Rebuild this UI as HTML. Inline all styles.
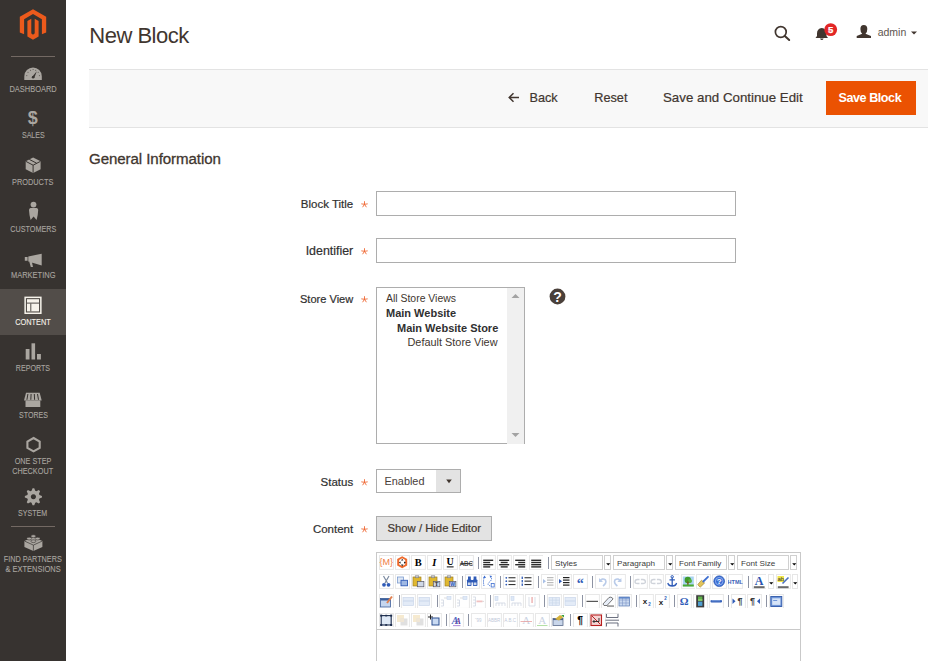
<!DOCTYPE html>
<html><head><meta charset="utf-8"><style>
*{box-sizing:border-box;margin:0;padding:0}
html,body{width:944px;height:661px;overflow:hidden;background:#fff;font-family:"Liberation Sans",sans-serif;color:#303030}
.t{position:absolute;white-space:nowrap;line-height:1}
#side{position:absolute;left:0;top:0;width:66px;height:661px;background:#373330}
.sep{position:absolute;left:11px;width:44px;height:1px;background:#736963}
.ml{position:absolute;left:-50px;width:166px;text-align:center;font-size:9.5px;line-height:1;color:#aaa6a0;white-space:nowrap}
.ml span{display:inline-block;transform:scaleX(0.77);transform-origin:50% 50%;-webkit-text-stroke:0.1px currentColor}
.act{position:absolute;left:0;top:289px;width:66px;height:46px;background:#524d49}
svg.ov{position:absolute;left:0;top:0}
.lbl{position:absolute;font-size:11.5px;line-height:1;color:#303030;white-space:nowrap;text-align:right;-webkit-text-stroke:0.2px #303030}
.req{position:absolute;font-size:12px;color:#eb5202;line-height:1}
.inp{position:absolute;border:1px solid #adadad;background:#fff}
</style></head><body>
<div id="side">
<div class="act"></div>
<div class="sep" style="top:56px"></div>
<div class="sep" style="top:526px"></div>
<div class="ml" style="top:83.96px"><span style="transform:scaleX(0.785)">DASHBOARD</span></div>
<div class="ml" style="top:129.96px"><span style="transform:scaleX(0.743)">SALES</span></div>
<div class="ml" style="top:176.96px"><span style="transform:scaleX(0.774)">PRODUCTS</span></div>
<div class="ml" style="top:224.26px"><span style="transform:scaleX(0.760)">CUSTOMERS</span></div>
<div class="ml" style="top:269.96px"><span style="transform:scaleX(0.788)">MARKETING</span></div>
<div class="ml" style="top:316.96px;color:#f7f3eb"><span style="transform:scaleX(0.776)">CONTENT</span></div>
<div class="ml" style="top:363.26px"><span style="transform:scaleX(0.746)">REPORTS</span></div>
<div class="ml" style="top:410.26px"><span style="transform:scaleX(0.742)">STORES</span></div>
<div class="ml" style="top:455.96px"><span style="transform:scaleX(0.765)">ONE STEP</span></div>
<div class="ml" style="top:465.66px"><span style="transform:scaleX(0.768)">CHECKOUT</span></div>
<div class="ml" style="top:507.96px"><span style="transform:scaleX(0.745)">SYSTEM</span></div>
<div class="ml" style="top:553.96px"><span style="transform:scaleX(0.767)">FIND PARTNERS</span></div>
<div class="ml" style="top:563.96px"><span style="transform:scaleX(0.785)">&amp; EXTENSIONS</span></div>
</div>
<svg class="ov" width="66" height="661" viewBox="0 0 66 661">
<path fill="#ec5a1c" d="M33,9.2 L46.2,16.8 L46.2,32.5 L41.9,34.2 L41.9,19.3 L33,14.1 L24.1,19.3 L24.1,34.2 L19.8,32.5 L19.8,16.8 Z"/>
<path fill="#ec5a1c" d="M27.4,21 L31.3,18.8 L31.3,33.2 Q33,35.8 34.7,33.2 L34.7,18.8 L38.6,21 L38.6,36.5 L33,39.8 L27.4,36.5 Z"/>
<path fill="#aaa6a0" d="M24.3,80 L24.3,76.3 A8.75,8.75 0 0 1 41.8,76.3 L41.8,80 Z"/>
<path fill="#373330" d="M32,77 L36.8,71.3 L34.3,77.8 Z"/><circle cx="33.1" cy="77.2" r="1.3" fill="#373330"/>
<circle cx="26.8" cy="75.6" r="0.55" fill="#5a5550"/>
<circle cx="28.0" cy="72.3" r="0.55" fill="#5a5550"/>
<circle cx="30.5" cy="70.2" r="0.55" fill="#5a5550"/>
<circle cx="33.1" cy="69.5" r="0.55" fill="#5a5550"/>
<circle cx="35.7" cy="70.2" r="0.55" fill="#5a5550"/>
<circle cx="38.2" cy="72.3" r="0.55" fill="#5a5550"/>
<circle cx="39.4" cy="75.6" r="0.55" fill="#5a5550"/>
<text x="32.7" y="124.3" font-family="Liberation Sans" font-weight="bold" font-size="18" fill="#aaa6a0" text-anchor="middle">$</text>
<path fill="#aaa6a0" d="M33.1,157.4 L40.6,161.2 L40.6,169.2 L33.1,173 L25.7,169.2 L25.7,161.2 Z"/>
<path fill="none" stroke="#373330" stroke-width="1" d="M25.9,161.4 L33.1,165.2 L40.4,161.4 M33.1,165.2 L33.1,172.8 M29.3,159.4 L36.6,163.2"/>
<circle cx="33.5" cy="204.6" r="2.9" fill="#aaa6a0"/>
<path fill="#aaa6a0" d="M30.5,208 L36.7,208 Q38.2,208.3 38.2,210 L37.7,215 L36.6,220 L33.6,216.6 L30.6,220 L29.5,215 L29,210 Q29,208.3 30.5,208 Z"/>
<path fill="#aaa6a0" d="M24.8,257 L27.6,257 L27.6,260.8 L24.8,260.8 Z M28.3,256.4 L41.7,253.7 L41.7,265.4 L28.3,261.4 Z M29.2,261.6 L32,262.4 L33,266.9 L30.8,266.9 Z"/>
<rect x="24.4" y="296.6" width="17.2" height="17.4" fill="#f7f3eb"/>
<rect x="25.9" y="298.1" width="14.2" height="14.4" fill="#524d49"/>
<rect x="27" y="299.2" width="12" height="12.2" fill="#f7f3eb"/>
<rect x="27" y="302.6" width="12" height="1" fill="#524d49"/>
<rect x="30.3" y="303.4" width="1" height="8" fill="#524d49"/>
<rect x="25.7" y="349" width="3.8" height="10.5" fill="#aaa6a0"/>
<rect x="31.5" y="343.3" width="3.6" height="16.2" fill="#aaa6a0"/>
<rect x="37" y="354" width="3.9" height="5.5" fill="#aaa6a0"/>
<path fill="#aaa6a0" d="M26,392.8 L39.7,392.8 L41.7,400.5 L24,400.5 Z"/>
<path stroke="#373330" stroke-width="1" d="M27.9,394 L26.9,399.8 M31.1,394 L30.8,399.8 M34.3,394 L34.6,399.8 M37.5,394 L38.5,399.8"/>
<rect x="25.5" y="400.5" width="14.8" height="6.5" fill="#aaa6a0"/>
<path fill="none" stroke="#aaa6a0" stroke-width="2.1" d="M33.55,438 L39.7,441.5 L39.7,447.8 L33.55,451.3 L27.4,447.8 L27.4,441.5 Z"/>
<path fill="#aaa6a0" fill-rule="evenodd" d="M41.96,495.91 L41.96,497.59 L39.43,498.58 L38.96,499.72 L40.05,502.21 L38.86,503.40 L36.37,502.31 L35.23,502.78 L34.24,505.31 L32.56,505.31 L31.57,502.78 L30.43,502.31 L27.94,503.40 L26.75,502.21 L27.84,499.72 L27.37,498.58 L24.84,497.59 L24.84,495.91 L27.37,494.92 L27.84,493.78 L26.75,491.29 L27.94,490.10 L30.43,491.19 L31.57,490.72 L32.56,488.19 L34.24,488.19 L35.23,490.72 L36.37,491.19 L38.86,490.10 L40.05,491.29 L38.96,493.78 L39.43,494.92 Z M33.40,494.15 a2.6,2.6 0 1 0 0.01,0 Z"/>
<path fill="#aaa6a0" d="M33.4,537 L42.4,541 L42.4,547 L33.4,551 L24.4,547 L24.4,541 Z"/>
<path fill="none" stroke="#373330" stroke-width="0.7" d="M24.6,541.1 L33.4,545.1 L42.2,541.1 M33.4,545.1 L33.4,550.8"/>
<ellipse cx="33.4" cy="536.2" rx="2.5" ry="1.4" fill="#aaa6a0" stroke="#373330" stroke-width="0.6"/>
<ellipse cx="29.2" cy="538.6" rx="2.5" ry="1.4" fill="#aaa6a0" stroke="#373330" stroke-width="0.6"/>
<ellipse cx="37.6" cy="538.6" rx="2.5" ry="1.4" fill="#aaa6a0" stroke="#373330" stroke-width="0.6"/>
<ellipse cx="33.4" cy="541.2" rx="2.5" ry="1.4" fill="#aaa6a0" stroke="#373330" stroke-width="0.6"/>
</svg>
<div class="t" style="left:89.30px;top:24.78px;font-size:22px;color:#41362f;font-weight:normal;letter-spacing:-0.5px">New Block</div>
<div style="position:absolute;left:89px;top:69px;width:839px;height:59px;background:#f8f8f8;border-top:1px solid #e3e3e3;border-bottom:1px solid #e3e3e3"></div>
<div class="t" style="left:529.50px;top:91.75px;font-size:12.7px;color:#41362f;font-weight:normal;-webkit-text-stroke:0.2px #41362f">Back</div>
<div class="t" style="left:594.30px;top:91.75px;font-size:12.7px;color:#41362f;font-weight:normal;-webkit-text-stroke:0.2px #41362f">Reset</div>
<div class="t" style="left:663.00px;top:90.74px;font-size:13.3px;color:#41362f;font-weight:normal;-webkit-text-stroke:0.2px #41362f">Save and Continue Edit</div>
<div style="position:absolute;left:826px;top:81px;width:90px;height:34px;background:#eb5202"></div>
<div class="t" style="left:838.50px;top:91.83px;font-size:12.6px;color:#ffffff;font-weight:bold;letter-spacing:-0.45px">Save Block</div>
<div class="t" style="left:877.70px;top:27.31px;font-size:10.5px;color:#5e554f;font-weight:normal;">admin</div>
<div class="t" style="left:89.00px;top:151.42px;font-size:15.1px;color:#41362f;font-weight:normal;-webkit-text-stroke:0.3px #41362f;letter-spacing:-0.08px">General Information</div>
<svg class="ov" width="944" height="661" viewBox="0 0 944 661">
<path fill="none" stroke="#41362f" stroke-width="1.5" d="M519,97.5 L509.5,97.5 M513.5,93.2 L509.2,97.5 L513.5,101.8"/>
<circle cx="780.8" cy="32" r="5.4" fill="none" stroke="#41362f" stroke-width="1.7"/>
<path stroke="#41362f" stroke-width="2" stroke-linecap="round" d="M784.8,36 L789.2,40"/>
<path fill="#41362f" d="M821.8,28 Q826.5,28.5 826.5,33.5 L826.5,36 L828,38 L815.5,38 L817,36 L817,33.5 Q817,28.5 821.8,28 Z"/>
<path fill="#41362f" d="M820,38.5 L823.6,38.5 Q823,40 821.8,40 Q820.6,40 820,38.5 Z"/>
<circle cx="830.7" cy="29.6" r="6.4" fill="#e22626"/>
<text x="830.7" y="32.9" font-family="Liberation Sans" font-weight="bold" font-size="9.5" fill="#fff" text-anchor="middle" stroke="#fff" stroke-width="0.25">5</text>
<path fill="#41362f" d="M863.8,24.9 Q867.3,25 867.3,29 Q867.3,32.5 865.5,33.8 L871,36 L871,38 L856.7,38 L856.7,36 L862.2,33.8 Q860.4,32.5 860.4,29 Q860.4,25 863.8,24.9 Z"/>
<path fill="#41362f" d="M911,31.5 L917,31.5 L914,34.6 Z"/>
</svg>
<div class="lbl" style="right:590.80px;top:198.87px;font-size:11.5px">Block Title</div>
<svg style="position:absolute;left:360.6px;top:200.80px" width="7" height="7" viewBox="0 0 7 7"><path stroke="#ef6a35" stroke-width="0.9" stroke-linecap="round" d="M3.5,3.3 L3.5,0.6 M3.5,3.3 L0.7,2.9 M3.5,3.3 L6.3,2.9 M3.5,3.3 L1.8,5.9 M3.5,3.3 L5.2,5.9"/></svg>
<div class="inp" style="left:376px;top:191px;width:360px;height:25px"></div>
<div class="lbl" style="right:590.80px;top:245.30px;font-size:12.4px">Identifier</div>
<svg style="position:absolute;left:360.6px;top:248.00px" width="7" height="7" viewBox="0 0 7 7"><path stroke="#ef6a35" stroke-width="0.9" stroke-linecap="round" d="M3.5,3.3 L3.5,0.6 M3.5,3.3 L0.7,2.9 M3.5,3.3 L6.3,2.9 M3.5,3.3 L1.8,5.9 M3.5,3.3 L5.2,5.9"/></svg>
<div class="inp" style="left:376px;top:238px;width:360px;height:25px"></div>
<div class="lbl" style="right:590.80px;top:294.15px;font-size:11.05px">Store View</div>
<svg style="position:absolute;left:360.6px;top:295.70px" width="7" height="7" viewBox="0 0 7 7"><path stroke="#ef6a35" stroke-width="0.9" stroke-linecap="round" d="M3.5,3.3 L3.5,0.6 M3.5,3.3 L0.7,2.9 M3.5,3.3 L6.3,2.9 M3.5,3.3 L1.8,5.9 M3.5,3.3 L5.2,5.9"/></svg>
<div class="inp" style="left:376px;top:287px;width:149px;height:157px;overflow:visible"><div style="position:absolute;right:0;top:0;width:17px;height:156px;background:#f0f0f0"></div><svg style="position:absolute;right:4px;top:4.8px" width="9" height="6"><path fill="#a3a3a3" d="M0.5,5 L4.5,1 L8.5,5 Z"/></svg><svg style="position:absolute;right:4px;top:144px" width="9" height="6"><path fill="#a3a3a3" d="M0.5,1 L4.5,5 L8.5,1 Z"/></svg></div>
<div class="t" style="left:386.00px;top:293.85px;font-size:10.45px;color:#41362f;font-weight:normal;">All Store Views</div>
<div class="t" style="left:386.00px;top:307.79px;font-size:11px;color:#303030;font-weight:bold;">Main Website</div>
<div class="t" style="left:397.00px;top:323.09px;font-size:11px;color:#303030;font-weight:bold;">Main Website Store</div>
<div class="t" style="left:407.50px;top:337.07px;font-size:10.9px;color:#41362f;font-weight:normal;">Default Store View</div>
<svg style="position:absolute;left:549px;top:288px" width="17" height="17" viewBox="0 0 17 17"><circle cx="8.5" cy="8.5" r="7.9" fill="#4a403a"/><text x="8.5" y="13.6" font-family="Liberation Sans" font-weight="bold" font-size="14" fill="#fff" text-anchor="middle">?</text></svg>
<div class="lbl" style="right:590.80px;top:477.27px;font-size:11.5px">Status</div>
<svg style="position:absolute;left:360.6px;top:479.20px" width="7" height="7" viewBox="0 0 7 7"><path stroke="#ef6a35" stroke-width="0.9" stroke-linecap="round" d="M3.5,3.3 L3.5,0.6 M3.5,3.3 L0.7,2.9 M3.5,3.3 L6.3,2.9 M3.5,3.3 L1.8,5.9 M3.5,3.3 L5.2,5.9"/></svg>
<div class="inp" style="left:376px;top:469px;width:85px;height:24px"><div style="position:absolute;left:59px;top:0;width:24px;height:22px;background:#e3e3e3"></div><svg style="position:absolute;left:68.5px;top:9.3px" width="7" height="5"><path fill="#41362f" d="M0.2,0.5 L5.8,0.5 L3,4.3 Z"/></svg></div>
<div class="t" style="left:384.50px;top:475.97px;font-size:10.9px;color:#4a403a;font-weight:normal;">Enabled</div>
<div class="lbl" style="right:590.80px;top:523.97px;font-size:11.5px">Content</div>
<svg style="position:absolute;left:360.6px;top:525.90px" width="7" height="7" viewBox="0 0 7 7"><path stroke="#ef6a35" stroke-width="0.9" stroke-linecap="round" d="M3.5,3.3 L3.5,0.6 M3.5,3.3 L0.7,2.9 M3.5,3.3 L6.3,2.9 M3.5,3.3 L1.8,5.9 M3.5,3.3 L5.2,5.9"/></svg>
<div class="inp" style="left:376px;top:516px;width:116px;height:25px;background:#e3e3e3"></div>
<div class="t" style="left:387.50px;top:523.23px;font-size:11.3px;color:#41362f;font-weight:normal;-webkit-text-stroke:0.2px #41362f">Show / Hide Editor</div>
<div style="position:absolute;left:376px;top:552px;width:425px;height:120px;border:1px solid #c9c9c9;background:#fff"></div>
<div style="position:absolute;left:377px;top:629px;width:423px;height:1px;background:#c9c9c9"></div>
<svg style="position:absolute;left:379.20px;top:555.40px" width="14.9" height="14.9" viewBox="0 0 14.9 14.9"><rect x="0.5" y="0.5" width="13.9" height="13.9" fill="#fff" stroke="#e8e8e8" stroke-width="1"/><text x="7.2" y="10.3" font-family="Liberation Sans" font-size="9" fill="#f07b3f" text-anchor="middle">{M}</text></svg>
<svg style="position:absolute;left:395.10px;top:555.40px" width="14.9" height="14.9" viewBox="0 0 14.9 14.9"><rect x="0.5" y="0.5" width="13.9" height="13.9" fill="#fff" stroke="#e8e8e8" stroke-width="1"/><path fill="#ee6a2c" d="M7.2,1.2 L12.2,4 L12.2,10.4 L7.2,13.2 L2.2,10.4 L2.2,4 Z"/><path fill="#fff" d="M7.2,3.3 L10.2,5 L10.2,9.4 L7.2,11.1 L4.2,9.4 L4.2,5 Z"/><path fill="#222" d="M7.2,3.8 L8.4,5.6 L6,5.6 Z M7.2,11.6 L8.4,9.6 L6,9.6 Z M3.8,7.6 L5.6,6.4 L5.6,8.8 Z M11,7.6 L9,6.4 L9,8.8 Z"/></svg>
<svg style="position:absolute;left:411.00px;top:555.40px" width="14.9" height="14.9" viewBox="0 0 14.9 14.9"><rect x="0.5" y="0.5" width="13.9" height="13.9" fill="#fff" stroke="#e8e8e8" stroke-width="1"/><text x="7.2" y="11" font-family="Liberation Serif" font-weight="bold" font-size="10.5" fill="#000" text-anchor="middle">B</text></svg>
<svg style="position:absolute;left:426.90px;top:555.40px" width="14.9" height="14.9" viewBox="0 0 14.9 14.9"><rect x="0.5" y="0.5" width="13.9" height="13.9" fill="#fff" stroke="#e8e8e8" stroke-width="1"/><text x="7.2" y="11" font-family="Liberation Serif" font-weight="bold" font-style="italic" font-size="10.5" fill="#000" text-anchor="middle">I</text></svg>
<svg style="position:absolute;left:442.80px;top:555.40px" width="14.9" height="14.9" viewBox="0 0 14.9 14.9"><rect x="0.5" y="0.5" width="13.9" height="13.9" fill="#fff" stroke="#e8e8e8" stroke-width="1"/><text x="7.2" y="10.3" font-family="Liberation Serif" font-weight="bold" font-size="10" fill="#000" text-anchor="middle">U</text><rect x="3.8" y="11.4" width="6.8" height="1" fill="#000"/></svg>
<svg style="position:absolute;left:458.70px;top:555.40px" width="14.9" height="14.9" viewBox="0 0 14.9 14.9"><rect x="0.5" y="0.5" width="13.9" height="13.9" fill="#fff" stroke="#e8e8e8" stroke-width="1"/><text x="7.4" y="11" font-family="Liberation Sans" font-size="6.5" fill="#111" text-anchor="middle" transform="translate(7.4,0) scale(1,1.15) translate(-7.4,-1.4)">ABC</text><rect x="1.5" y="8.3" width="11.8" height="0.9" fill="#111"/></svg>
<div style="position:absolute;left:478.00px;top:556.60px;width:1px;height:12px;background:#8d93a3"></div>
<svg style="position:absolute;left:480.80px;top:555.40px" width="14.9" height="14.9" viewBox="0 0 14.9 14.9"><rect x="0.5" y="0.5" width="13.9" height="13.9" fill="#fff" stroke="#e8e8e8" stroke-width="1"/><rect x="2.2" y="4.6" width="10.0" height="1.4" fill="#2a2a2a"/><rect x="2.2" y="6.8" width="7.0" height="1.4" fill="#2a2a2a"/><rect x="2.2" y="9.0" width="10.0" height="1.4" fill="#2a2a2a"/><rect x="2.2" y="11.2" width="7.0" height="1.4" fill="#2a2a2a"/></svg>
<svg style="position:absolute;left:496.70px;top:555.40px" width="14.9" height="14.9" viewBox="0 0 14.9 14.9"><rect x="0.5" y="0.5" width="13.9" height="13.9" fill="#fff" stroke="#e8e8e8" stroke-width="1"/><rect x="2.2" y="4.6" width="10.0" height="1.4" fill="#2a2a2a"/><rect x="3.7" y="6.8" width="7.0" height="1.4" fill="#2a2a2a"/><rect x="2.2" y="9.0" width="10.0" height="1.4" fill="#2a2a2a"/><rect x="3.7" y="11.2" width="7.0" height="1.4" fill="#2a2a2a"/></svg>
<svg style="position:absolute;left:512.60px;top:555.40px" width="14.9" height="14.9" viewBox="0 0 14.9 14.9"><rect x="0.5" y="0.5" width="13.9" height="13.9" fill="#fff" stroke="#e8e8e8" stroke-width="1"/><rect x="2.2" y="4.6" width="10.0" height="1.4" fill="#2a2a2a"/><rect x="5.2" y="6.8" width="7.0" height="1.4" fill="#2a2a2a"/><rect x="2.2" y="9.0" width="10.0" height="1.4" fill="#2a2a2a"/><rect x="5.2" y="11.2" width="7.0" height="1.4" fill="#2a2a2a"/></svg>
<svg style="position:absolute;left:528.50px;top:555.40px" width="14.9" height="14.9" viewBox="0 0 14.9 14.9"><rect x="0.5" y="0.5" width="13.9" height="13.9" fill="#fff" stroke="#e8e8e8" stroke-width="1"/><rect x="2.2" y="4.6" width="10.0" height="1.4" fill="#2a2a2a"/><rect x="2.2" y="6.8" width="10.0" height="1.4" fill="#2a2a2a"/><rect x="2.2" y="9.0" width="10.0" height="1.4" fill="#2a2a2a"/><rect x="2.2" y="11.2" width="10.0" height="1.4" fill="#2a2a2a"/></svg>
<div style="position:absolute;left:547.80px;top:556.60px;width:1px;height:12px;background:#8d93a3"></div>
<svg style="position:absolute;left:379.20px;top:574.40px" width="14.9" height="14.9" viewBox="0 0 14.9 14.9"><rect x="0.5" y="0.5" width="13.9" height="13.9" fill="#fff" stroke="#e8e8e8" stroke-width="1"/><path stroke="#7b8aa0" stroke-width="1.2" d="M4.5,2 L8.5,9 M10,2 L6,9"/><circle cx="5" cy="10.8" r="1.9" fill="#2f5bb7"/><circle cx="9.5" cy="10.8" r="1.9" fill="#2f5bb7"/></svg>
<svg style="position:absolute;left:395.10px;top:574.40px" width="14.9" height="14.9" viewBox="0 0 14.9 14.9"><rect x="0.5" y="0.5" width="13.9" height="13.9" fill="#fff" stroke="#e8e8e8" stroke-width="1"/><rect x="2.5" y="3" width="6" height="6" fill="#dfe8f5" stroke="#7c9ccf" stroke-width="0.8"/><rect x="6" y="6.3" width="6.5" height="5.5" fill="#9fb8e3" stroke="#2f5bb7" stroke-width="0.9"/></svg>
<svg style="position:absolute;left:411.00px;top:574.40px" width="14.9" height="14.9" viewBox="0 0 14.9 14.9"><rect x="0.5" y="0.5" width="13.9" height="13.9" fill="#fff" stroke="#e8e8e8" stroke-width="1"/><rect x="2" y="3" width="8" height="9" fill="#e0b830" stroke="#a08020" stroke-width="0.7"/><rect x="4.2" y="1.8" width="3.6" height="2" fill="#c9c9c9" stroke="#777" stroke-width="0.5"/><rect x="6.3" y="7.5" width="6.6" height="5.3" fill="#cfd8e6" stroke="#556" stroke-width="0.7"/></svg>
<svg style="position:absolute;left:426.90px;top:574.40px" width="14.9" height="14.9" viewBox="0 0 14.9 14.9"><rect x="0.5" y="0.5" width="13.9" height="13.9" fill="#fff" stroke="#e8e8e8" stroke-width="1"/><rect x="2" y="3" width="8" height="9" fill="#e0b830" stroke="#a08020" stroke-width="0.7"/><rect x="4.2" y="1.8" width="3.6" height="2" fill="#c9c9c9" stroke="#777" stroke-width="0.5"/><rect x="6.3" y="7.5" width="6.6" height="5.3" fill="#cfd8e6" stroke="#556" stroke-width="0.7"/><text x="9.5" y="12" font-family="Liberation Serif" font-weight="bold" font-size="5.5" fill="#222" text-anchor="middle">T</text></svg>
<svg style="position:absolute;left:442.80px;top:574.40px" width="14.9" height="14.9" viewBox="0 0 14.9 14.9"><rect x="0.5" y="0.5" width="13.9" height="13.9" fill="#fff" stroke="#e8e8e8" stroke-width="1"/><rect x="2" y="3" width="8" height="9" fill="#e0b830" stroke="#a08020" stroke-width="0.7"/><rect x="4.2" y="1.8" width="3.6" height="2" fill="#c9c9c9" stroke="#777" stroke-width="0.5"/><rect x="6.3" y="7.5" width="6.6" height="5.3" fill="#cfd8e6" stroke="#556" stroke-width="0.7"/><text x="9.5" y="12" font-family="Liberation Sans" font-weight="bold" font-size="5" fill="#2a52be" text-anchor="middle">W</text></svg>
<div style="position:absolute;left:462.10px;top:575.60px;width:1px;height:12px;background:#8d93a3"></div>
<svg style="position:absolute;left:464.90px;top:574.40px" width="14.9" height="14.9" viewBox="0 0 14.9 14.9"><rect x="0.5" y="0.5" width="13.9" height="13.9" fill="#fff" stroke="#e8e8e8" stroke-width="1"/><rect x="2" y="5.5" width="4.5" height="6.5" rx="0.8" fill="#2f5bb7"/><rect x="7.9" y="5.5" width="4.5" height="6.5" rx="0.8" fill="#2f5bb7"/><rect x="3" y="2.5" width="2.8" height="3.5" fill="#2f5bb7"/><rect x="8.6" y="2.5" width="2.8" height="3.5" fill="#2f5bb7"/><rect x="6" y="6" width="2.4" height="2.4" fill="#2f5bb7"/><rect x="2.8" y="8.5" width="2.8" height="2.6" fill="#cdd9ee"/><rect x="8.7" y="8.5" width="2.8" height="2.6" fill="#cdd9ee"/></svg>
<svg style="position:absolute;left:480.80px;top:574.40px" width="14.9" height="14.9" viewBox="0 0 14.9 14.9"><rect x="0.5" y="0.5" width="13.9" height="13.9" fill="#fff" stroke="#e8e8e8" stroke-width="1"/><path fill="none" stroke="#3f6fd0" stroke-width="1" stroke-dasharray="1.3,0.9" d="M3,12 Q1.8,7 3.5,2.5 M9.5,2 Q12,5 8.5,8 Q5,11 10,12"/><path fill="#3f6fd0" d="M2,4 L3.6,1.5 L5,4 Z M8.5,1.5 L11,2 L9.5,4 Z"/><rect x="10.2" y="9.6" width="3" height="3.4" fill="none" stroke="#3f6fd0" stroke-width="0.8"/></svg>
<div style="position:absolute;left:500.10px;top:575.60px;width:1px;height:12px;background:#8d93a3"></div>
<svg style="position:absolute;left:502.90px;top:574.40px" width="14.9" height="14.9" viewBox="0 0 14.9 14.9"><rect x="0.5" y="0.5" width="13.9" height="13.9" fill="#fff" stroke="#e8e8e8" stroke-width="1"/><circle cx="3.3" cy="3.8" r="0.9" fill="#2f5bb7"/><circle cx="3.3" cy="7.2" r="0.9" fill="#2f5bb7"/><circle cx="3.3" cy="10.6" r="0.9" fill="#2f5bb7"/><rect x="5.5" y="3.2" width="7" height="1.1" fill="#333"/><rect x="5.5" y="6.6" width="7" height="1.1" fill="#333"/><rect x="5.5" y="10" width="7" height="1.1" fill="#333"/></svg>
<svg style="position:absolute;left:518.80px;top:574.40px" width="14.9" height="14.9" viewBox="0 0 14.9 14.9"><rect x="0.5" y="0.5" width="13.9" height="13.9" fill="#fff" stroke="#e8e8e8" stroke-width="1"/><rect x="2.6" y="2.6" width="1.3" height="2.4" fill="#2f5bb7"/><rect x="2.6" y="6" width="1.3" height="2.4" fill="#2f5bb7"/><rect x="2.6" y="9.5" width="1.3" height="2.4" fill="#2f5bb7"/><rect x="5.5" y="3.2" width="7" height="1.1" fill="#333"/><rect x="5.5" y="6.6" width="7" height="1.1" fill="#333"/><rect x="5.5" y="10" width="7" height="1.1" fill="#333"/></svg>
<div style="position:absolute;left:538.10px;top:575.60px;width:1px;height:12px;background:#8d93a3"></div>
<svg style="position:absolute;left:540.90px;top:574.40px" width="14.9" height="14.9" viewBox="0 0 14.9 14.9"><rect x="0.5" y="0.5" width="13.9" height="13.9" fill="#fff" stroke="#e8e8e8" stroke-width="1"/><rect x="6" y="3" width="6.5" height="1.2" fill="#bbb"/><rect x="6" y="5.5" width="6.5" height="1.2" fill="#bbb"/><rect x="6" y="8" width="6.5" height="1.2" fill="#bbb"/><rect x="6" y="10.5" width="6.5" height="1.2" fill="#bbb"/><path fill="#a9c0e6" d="M2,5 L5,7.2 L2,9.4 Z"/></svg>
<svg style="position:absolute;left:556.80px;top:574.40px" width="14.9" height="14.9" viewBox="0 0 14.9 14.9"><rect x="0.5" y="0.5" width="13.9" height="13.9" fill="#fff" stroke="#e8e8e8" stroke-width="1"/><rect x="6" y="3" width="6.5" height="1.2" fill="#222"/><rect x="6" y="5.5" width="6.5" height="1.2" fill="#222"/><rect x="6" y="8" width="6.5" height="1.2" fill="#222"/><rect x="6" y="10.5" width="6.5" height="1.2" fill="#222"/><path fill="#2f5bb7" d="M2,5 L5,7.2 L2,9.4 Z"/></svg>
<svg style="position:absolute;left:572.70px;top:574.40px" width="14.9" height="14.9" viewBox="0 0 14.9 14.9"><rect x="0.5" y="0.5" width="13.9" height="13.9" fill="#fff" stroke="#e8e8e8" stroke-width="1"/><text x="7.2" y="14" font-family="Liberation Serif" font-weight="bold" font-size="14" fill="#2f5bb7" text-anchor="middle">&#8220;</text></svg>
<div style="position:absolute;left:592.00px;top:575.60px;width:1px;height:12px;background:#8d93a3"></div>
<svg style="position:absolute;left:594.80px;top:574.40px" width="14.9" height="14.9" viewBox="0 0 14.9 14.9"><rect x="0.5" y="0.5" width="13.9" height="13.9" fill="#fff" stroke="#e8e8e8" stroke-width="1"/><path fill="none" stroke="#b9cbe9" stroke-width="1.6" d="M4.5,7.5 Q7,3.5 10.5,6 Q12,9 8,12"/><path fill="#b9cbe9" d="M4,4 L4,8 L8,8 Z"/></svg>
<svg style="position:absolute;left:610.70px;top:574.40px" width="14.9" height="14.9" viewBox="0 0 14.9 14.9"><rect x="0.5" y="0.5" width="13.9" height="13.9" fill="#fff" stroke="#e8e8e8" stroke-width="1"/><path fill="none" stroke="#b9cbe9" stroke-width="1.6" d="M9.9,7.5 Q7.4,3.5 3.9,6 Q2.4,9 6.4,12"/><path fill="#b9cbe9" d="M10.4,4 L10.4,8 L6.4,8 Z"/></svg>
<div style="position:absolute;left:630.00px;top:575.60px;width:1px;height:12px;background:#8d93a3"></div>
<svg style="position:absolute;left:632.80px;top:574.40px" width="14.9" height="14.9" viewBox="0 0 14.9 14.9"><rect x="0.5" y="0.5" width="13.9" height="13.9" fill="#fff" stroke="#e8e8e8" stroke-width="1"/><path fill="none" stroke="#cfd3da" stroke-width="1.3" d="M2,8 Q2,5.5 4.5,5.5 L6.5,5.5 M7.9,5.5 L9.9,5.5 Q12.4,5.5 12.4,8 Q12.4,9.5 9.9,9.5 L7.9,9.5 M6.5,9.5 L4.5,9.5 Q2,9.5 2,8"/></svg>
<svg style="position:absolute;left:648.70px;top:574.40px" width="14.9" height="14.9" viewBox="0 0 14.9 14.9"><rect x="0.5" y="0.5" width="13.9" height="13.9" fill="#fff" stroke="#e8e8e8" stroke-width="1"/><path fill="none" stroke="#cfd3da" stroke-width="1.3" d="M2,8 Q2,5.5 4.5,5.5 L6.5,5.5 M7.9,5.5 L9.9,5.5 Q12.4,5.5 12.4,8 Q12.4,9.5 9.9,9.5 L7.9,9.5 M6.5,9.5 L4.5,9.5 Q2,9.5 2,8"/></svg>
<svg style="position:absolute;left:664.60px;top:574.40px" width="14.9" height="14.9" viewBox="0 0 14.9 14.9"><rect x="0.5" y="0.5" width="13.9" height="13.9" fill="#fff" stroke="#e8e8e8" stroke-width="1"/><path fill="none" stroke="#2f5bb7" stroke-width="1.3" d="M7.2,3.5 L7.2,12 M4.5,5.8 L9.9,5.8 M2.8,9 Q3.5,12 7.2,12 Q10.9,12 11.6,9"/><circle cx="7.2" cy="2.8" r="1.2" fill="none" stroke="#2f5bb7" stroke-width="1"/></svg>
<svg style="position:absolute;left:680.50px;top:574.40px" width="14.9" height="14.9" viewBox="0 0 14.9 14.9"><rect x="0.5" y="0.5" width="13.9" height="13.9" fill="#fff" stroke="#e8e8e8" stroke-width="1"/><rect x="1.8" y="2.5" width="11" height="10" fill="#a9d4f2"/><circle cx="6.8" cy="6" r="3.2" fill="#3f9a2c"/><circle cx="9" cy="7" r="2" fill="#56b23a"/><rect x="6.2" y="7.5" width="1.4" height="4" fill="#7a5020"/><rect x="1.8" y="10.5" width="11" height="2" fill="#4caa34"/></svg>
<svg style="position:absolute;left:696.40px;top:574.40px" width="14.9" height="14.9" viewBox="0 0 14.9 14.9"><rect x="0.5" y="0.5" width="13.9" height="13.9" fill="#fff" stroke="#e8e8e8" stroke-width="1"/><path fill="#e2c45a" stroke="#9a7a20" stroke-width="0.6" d="M1.8,10.5 L5.5,6.2 L8.6,9 L4.5,13 Q3,12.8 1.8,10.5 Z"/><path stroke="#3f6fd0" stroke-width="1.8" stroke-linecap="round" d="M7.3,7.5 L12,2.8"/></svg>
<svg style="position:absolute;left:712.30px;top:574.40px" width="14.9" height="14.9" viewBox="0 0 14.9 14.9"><rect x="0.5" y="0.5" width="13.9" height="13.9" fill="#fff" stroke="#e8e8e8" stroke-width="1"/><circle cx="7.2" cy="7.2" r="5.4" fill="#3b6fd6" stroke="#1f4aa3" stroke-width="0.6"/><circle cx="7.2" cy="7.2" r="3.8" fill="none" stroke="#cfe0ff" stroke-width="0.5"/><text x="7.2" y="10" font-family="Liberation Sans" font-weight="bold" font-size="8" fill="#fff" text-anchor="middle">?</text></svg>
<svg style="position:absolute;left:728.20px;top:574.40px" width="14.9" height="14.9" viewBox="0 0 14.9 14.9"><rect x="0.5" y="0.5" width="13.9" height="13.9" fill="#fff" stroke="#e8e8e8" stroke-width="1"/><text x="7.2" y="9.6" font-family="Liberation Sans" font-weight="bold" font-size="5" fill="#3a62b8" text-anchor="middle" transform="translate(7.2,0) scale(1.1,1.2) translate(-7.2,-1.6)">HTML</text></svg>
<div style="position:absolute;left:747.50px;top:575.60px;width:1px;height:12px;background:#8d93a3"></div>
<svg style="position:absolute;left:379.20px;top:593.50px" width="14.9" height="14.9" viewBox="0 0 14.9 14.9"><rect x="0.5" y="0.5" width="13.9" height="13.9" fill="#fff" stroke="#e8e8e8" stroke-width="1"/><rect x="1.5" y="4.5" width="10" height="8.5" fill="#c5d6ef" stroke="#3d5f9a" stroke-width="0.8"/><rect x="1.5" y="4.5" width="10" height="2" fill="#3d5f9a"/><path stroke="#e08050" stroke-width="2" d="M8,9 L13,2.5"/></svg>
<div style="position:absolute;left:398.50px;top:594.70px;width:1px;height:12px;background:#8d93a3"></div>
<svg style="position:absolute;left:401.30px;top:593.50px" width="14.9" height="14.9" viewBox="0 0 14.9 14.9"><rect x="0.5" y="0.5" width="13.9" height="13.9" fill="#fff" stroke="#e8e8e8" stroke-width="1"/><rect x="2" y="3.5" width="10.5" height="8" fill="#e3ebf7" stroke="#c9d6ea" stroke-width="0.7"/><rect x="2" y="6.5" width="10.5" height="1" fill="#c9d6ea"/></svg>
<svg style="position:absolute;left:417.20px;top:593.50px" width="14.9" height="14.9" viewBox="0 0 14.9 14.9"><rect x="0.5" y="0.5" width="13.9" height="13.9" fill="#fff" stroke="#e8e8e8" stroke-width="1"/><rect x="2" y="3.5" width="10.5" height="8" fill="#e3ebf7" stroke="#c9d6ea" stroke-width="0.7"/><rect x="2" y="6.5" width="10.5" height="1" fill="#c9d6ea"/></svg>
<div style="position:absolute;left:436.50px;top:594.70px;width:1px;height:12px;background:#8d93a3"></div>
<svg style="position:absolute;left:439.30px;top:593.50px" width="14.9" height="14.9" viewBox="0 0 14.9 14.9"><rect x="0.5" y="0.5" width="13.9" height="13.9" fill="#fff" stroke="#e8e8e8" stroke-width="1"/><path fill="none" stroke="#cfd6e2" stroke-width="0.8" d="M2,6 L4.5,6 L4.5,12 L2,12 M2,9 L4.5,9"/><rect x="8" y="2.5" width="4" height="3" fill="#dfe9f7" stroke="#c8d6ec" stroke-width="0.6"/><path stroke="#d0d0d0" stroke-width="0.7" d="M5,4 L8,4"/></svg>
<svg style="position:absolute;left:455.20px;top:593.50px" width="14.9" height="14.9" viewBox="0 0 14.9 14.9"><rect x="0.5" y="0.5" width="13.9" height="13.9" fill="#fff" stroke="#e8e8e8" stroke-width="1"/><path fill="none" stroke="#cfd6e2" stroke-width="0.8" d="M2,6 L4.5,6 L4.5,12 L2,12 M2,9 L4.5,9"/><rect x="8" y="2.5" width="4" height="3" fill="#dfe9f7" stroke="#c8d6ec" stroke-width="0.6"/><path stroke="#d0d0d0" stroke-width="0.7" d="M5,4 L8,4"/></svg>
<svg style="position:absolute;left:471.10px;top:593.50px" width="14.9" height="14.9" viewBox="0 0 14.9 14.9"><rect x="0.5" y="0.5" width="13.9" height="13.9" fill="#fff" stroke="#e8e8e8" stroke-width="1"/><path fill="none" stroke="#cfd6e2" stroke-width="0.8" d="M2,3 L4.5,3 L4.5,12 L2,12 M2,6 L4.5,6 M2,9 L4.5,9"/><rect x="5.5" y="6.5" width="6" height="1.8" fill="#f1c1c1"/><path stroke="#ccc" stroke-width="0.7" d="M11.5,7.4 L13,7.4"/></svg>
<div style="position:absolute;left:490.40px;top:594.70px;width:1px;height:12px;background:#8d93a3"></div>
<svg style="position:absolute;left:493.20px;top:593.50px" width="14.9" height="14.9" viewBox="0 0 14.9 14.9"><rect x="0.5" y="0.5" width="13.9" height="13.9" fill="#fff" stroke="#e8e8e8" stroke-width="1"/><path fill="none" stroke="#cfd6e2" stroke-width="0.8" d="M3,12 L3,9 L12,9 L12,12 M6,9 L6,12 M9,9 L9,12"/><rect x="2" y="2.5" width="3" height="4" fill="#dfe9f7" stroke="#c8d6ec" stroke-width="0.6"/></svg>
<svg style="position:absolute;left:509.10px;top:593.50px" width="14.9" height="14.9" viewBox="0 0 14.9 14.9"><rect x="0.5" y="0.5" width="13.9" height="13.9" fill="#fff" stroke="#e8e8e8" stroke-width="1"/><path fill="none" stroke="#cfd6e2" stroke-width="0.8" d="M3,12 L3,9 L12,9 L12,12 M6,9 L6,12 M9,9 L9,12"/><rect x="2" y="2.5" width="3" height="4" fill="#dfe9f7" stroke="#c8d6ec" stroke-width="0.6"/></svg>
<svg style="position:absolute;left:525.00px;top:593.50px" width="14.9" height="14.9" viewBox="0 0 14.9 14.9"><rect x="0.5" y="0.5" width="13.9" height="13.9" fill="#fff" stroke="#e8e8e8" stroke-width="1"/><path fill="none" stroke="#cfd6e2" stroke-width="0.8" d="M4,3 L4,12 M10,3 L10,12 M4,12 L10,12"/><rect x="6.2" y="3" width="1.8" height="6" fill="#f1c1c1"/></svg>
<div style="position:absolute;left:544.30px;top:594.70px;width:1px;height:12px;background:#8d93a3"></div>
<svg style="position:absolute;left:547.10px;top:593.50px" width="14.9" height="14.9" viewBox="0 0 14.9 14.9"><rect x="0.5" y="0.5" width="13.9" height="13.9" fill="#fff" stroke="#e8e8e8" stroke-width="1"/><rect x="2" y="3.5" width="10.5" height="8" fill="#e3ebf7" stroke="#c9d6ea" stroke-width="0.7"/><path stroke="#c9d6ea" stroke-width="0.6" d="M2,6.2 L12.5,6.2 M2,8.9 L12.5,8.9 M5.5,3.5 L5.5,11.5 M9,3.5 L9,11.5"/></svg>
<svg style="position:absolute;left:563.00px;top:593.50px" width="14.9" height="14.9" viewBox="0 0 14.9 14.9"><rect x="0.5" y="0.5" width="13.9" height="13.9" fill="#fff" stroke="#e8e8e8" stroke-width="1"/><rect x="2" y="3.5" width="10.5" height="8" fill="#e3ebf7" stroke="#c9d6ea" stroke-width="0.7"/><rect x="2" y="6.5" width="10.5" height="1" fill="#c9d6ea"/></svg>
<div style="position:absolute;left:582.30px;top:594.70px;width:1px;height:12px;background:#8d93a3"></div>
<svg style="position:absolute;left:585.10px;top:593.50px" width="14.9" height="14.9" viewBox="0 0 14.9 14.9"><rect x="0.5" y="0.5" width="13.9" height="13.9" fill="#fff" stroke="#e8e8e8" stroke-width="1"/><rect x="1.5" y="6.8" width="11.5" height="1.1" fill="#444"/></svg>
<svg style="position:absolute;left:601.00px;top:593.50px" width="14.9" height="14.9" viewBox="0 0 14.9 14.9"><rect x="0.5" y="0.5" width="13.9" height="13.9" fill="#fff" stroke="#e8e8e8" stroke-width="1"/><path fill="#e8eef8" stroke="#555" stroke-width="0.8" d="M2,10 L8,3.5 Q10,2.5 11.5,4 L12,5 L6,11.5 L3,11.5 Z"/><rect x="6" y="11.6" width="7" height="0.9" fill="#444"/></svg>
<svg style="position:absolute;left:616.90px;top:593.50px" width="14.9" height="14.9" viewBox="0 0 14.9 14.9"><rect x="0.5" y="0.5" width="13.9" height="13.9" fill="#fff" stroke="#e8e8e8" stroke-width="1"/><rect x="2" y="3" width="10.5" height="9" fill="#cbdaf0" stroke="#5575b0" stroke-width="0.7"/><path stroke="#7d97c8" stroke-width="0.6" d="M2,6 L12.5,6 M2,9 L12.5,9 M5.5,3 L5.5,12 M9,3 L9,12"/><rect x="2" y="3" width="10.5" height="1.6" fill="#5f86c8"/></svg>
<div style="position:absolute;left:636.20px;top:594.70px;width:1px;height:12px;background:#8d93a3"></div>
<svg style="position:absolute;left:639.00px;top:593.50px" width="14.9" height="14.9" viewBox="0 0 14.9 14.9"><rect x="0.5" y="0.5" width="13.9" height="13.9" fill="#fff" stroke="#e8e8e8" stroke-width="1"/><text x="6" y="10.5" font-family="Liberation Sans" font-weight="bold" font-size="8" fill="#222" text-anchor="middle">x</text><text x="10.5" y="12" font-family="Liberation Sans" font-weight="bold" font-size="4.5" fill="#2f5bb7" text-anchor="middle">2</text></svg>
<svg style="position:absolute;left:654.90px;top:593.50px" width="14.9" height="14.9" viewBox="0 0 14.9 14.9"><rect x="0.5" y="0.5" width="13.9" height="13.9" fill="#fff" stroke="#e8e8e8" stroke-width="1"/><text x="6" y="11" font-family="Liberation Sans" font-weight="bold" font-size="8" fill="#222" text-anchor="middle">x</text><text x="10.5" y="6" font-family="Liberation Sans" font-weight="bold" font-size="4.5" fill="#2f5bb7" text-anchor="middle">2</text></svg>
<div style="position:absolute;left:674.20px;top:594.70px;width:1px;height:12px;background:#8d93a3"></div>
<svg style="position:absolute;left:677.00px;top:593.50px" width="14.9" height="14.9" viewBox="0 0 14.9 14.9"><rect x="0.5" y="0.5" width="13.9" height="13.9" fill="#fff" stroke="#e8e8e8" stroke-width="1"/><text x="7.2" y="11.5" font-family="Liberation Serif" font-weight="bold" font-size="11" fill="#2f5bb7" text-anchor="middle">&#937;</text></svg>
<svg style="position:absolute;left:692.90px;top:593.50px" width="14.9" height="14.9" viewBox="0 0 14.9 14.9"><rect x="0.5" y="0.5" width="13.9" height="13.9" fill="#fff" stroke="#e8e8e8" stroke-width="1"/><rect x="3.2" y="1.2" width="8" height="12.2" fill="#3d3d3d"/><rect x="5" y="2.5" width="4.4" height="4.3" fill="#5fb04a"/><rect x="5" y="7.6" width="4.4" height="4.3" fill="#4f9fd0"/><rect x="5" y="5.2" width="4.4" height="1.6" fill="#8fd070"/></svg>
<svg style="position:absolute;left:708.80px;top:593.50px" width="14.9" height="14.9" viewBox="0 0 14.9 14.9"><rect x="0.5" y="0.5" width="13.9" height="13.9" fill="#fff" stroke="#e8e8e8" stroke-width="1"/><rect x="1.5" y="6" width="11.5" height="2.6" rx="1" fill="#2f5bb7"/><rect x="2.5" y="6.4" width="9" height="0.8" fill="#9fbcea"/></svg>
<div style="position:absolute;left:728.10px;top:594.70px;width:1px;height:12px;background:#8d93a3"></div>
<svg style="position:absolute;left:730.90px;top:593.50px" width="14.9" height="14.9" viewBox="0 0 14.9 14.9"><rect x="0.5" y="0.5" width="13.9" height="13.9" fill="#fff" stroke="#e8e8e8" stroke-width="1"/><path fill="#2f5bb7" d="M1.5,4.5 L4.5,7.2 L1.5,9.9 Z"/><text x="9" y="10.5" font-family="Liberation Sans" font-weight="bold" font-size="9" fill="#333" text-anchor="middle">&#182;</text></svg>
<svg style="position:absolute;left:746.80px;top:593.50px" width="14.9" height="14.9" viewBox="0 0 14.9 14.9"><rect x="0.5" y="0.5" width="13.9" height="13.9" fill="#fff" stroke="#e8e8e8" stroke-width="1"/><path fill="#2f5bb7" d="M13,4.5 L10,7.2 L13,9.9 Z"/><text x="5.5" y="10.5" font-family="Liberation Sans" font-weight="bold" font-size="9" fill="#333" text-anchor="middle">&#182;</text></svg>
<div style="position:absolute;left:766.10px;top:594.70px;width:1px;height:12px;background:#8d93a3"></div>
<svg style="position:absolute;left:768.90px;top:593.50px" width="14.9" height="14.9" viewBox="0 0 14.9 14.9"><rect x="0.5" y="0.5" width="13.9" height="13.9" fill="#fff" stroke="#e8e8e8" stroke-width="1"/><rect x="1.8" y="2.5" width="11" height="10" fill="#6f95d8" stroke="#2f58a8" stroke-width="0.9"/><rect x="3.2" y="4.3" width="8.2" height="6.6" fill="#d6e4f8"/><rect x="4.2" y="6" width="4" height="1" fill="#6f95d8"/></svg>
<svg style="position:absolute;left:379.20px;top:612.60px" width="14.9" height="14.9" viewBox="0 0 14.9 14.9"><rect x="0.5" y="0.5" width="13.9" height="13.9" fill="#fff" stroke="#e8e8e8" stroke-width="1"/><rect x="2.2" y="2.6" width="10" height="9.4" fill="#dfe9f6" stroke="#1c2c4c" stroke-width="1.1"/><rect x="1.2" y="1.6" width="2" height="2" fill="#1c2c4c"/><rect x="11.2" y="1.6" width="2" height="2" fill="#1c2c4c"/><rect x="1.2" y="11" width="2" height="2" fill="#1c2c4c"/><rect x="11.2" y="11" width="2" height="2" fill="#1c2c4c"/><rect x="6.2" y="1.8" width="2" height="1.6" fill="#1c2c4c"/><rect x="6.2" y="11.2" width="2" height="1.6" fill="#1c2c4c"/></svg>
<svg style="position:absolute;left:395.10px;top:612.60px" width="14.9" height="14.9" viewBox="0 0 14.9 14.9"><rect x="0.5" y="0.5" width="13.9" height="13.9" fill="#fff" stroke="#e8e8e8" stroke-width="1"/><rect x="2" y="2" width="7" height="7" fill="#f6ead0"/><rect x="5.5" y="5.5" width="7" height="7" fill="#e0e0e0"/><rect x="5.5" y="5.5" width="3.5" height="3.5" fill="#f0e6d5"/></svg>
<svg style="position:absolute;left:411.00px;top:612.60px" width="14.9" height="14.9" viewBox="0 0 14.9 14.9"><rect x="0.5" y="0.5" width="13.9" height="13.9" fill="#fff" stroke="#e8e8e8" stroke-width="1"/><rect x="2" y="2" width="7" height="7" fill="#f6ead0"/><rect x="5.5" y="5.5" width="7" height="7" fill="#e0e0e0"/><rect x="5.5" y="5.5" width="3.5" height="3.5" fill="#f0e6d5"/></svg>
<svg style="position:absolute;left:426.90px;top:612.60px" width="14.9" height="14.9" viewBox="0 0 14.9 14.9"><rect x="0.5" y="0.5" width="13.9" height="13.9" fill="#fff" stroke="#e8e8e8" stroke-width="1"/><path stroke="#222" stroke-width="1" d="M3.5,1.5 L3.5,6.5 M1,4 L6,4"/><rect x="5" y="5" width="7" height="7" fill="#c9daf2" stroke="#2c4f90" stroke-width="1"/></svg>
<div style="position:absolute;left:446.20px;top:613.80px;width:1px;height:12px;background:#8d93a3"></div>
<svg style="position:absolute;left:449.00px;top:612.60px" width="14.9" height="14.9" viewBox="0 0 14.9 14.9"><rect x="0.5" y="0.5" width="13.9" height="13.9" fill="#fff" stroke="#e8e8e8" stroke-width="1"/><text x="6" y="11" font-family="Liberation Serif" font-style="italic" font-weight="bold" font-size="10" fill="#4b6bc5" text-anchor="middle">A</text><text x="9" y="11.5" font-family="Liberation Serif" font-style="italic" font-weight="bold" font-size="8.5" fill="#6a3a9a" text-anchor="middle">A</text><rect x="4" y="12.3" width="7.5" height="0.8" fill="#9a70d0"/></svg>
<div style="position:absolute;left:468.30px;top:613.80px;width:1px;height:12px;background:#8d93a3"></div>
<svg style="position:absolute;left:471.10px;top:612.60px" width="14.9" height="14.9" viewBox="0 0 14.9 14.9"><rect x="0.5" y="0.5" width="13.9" height="13.9" fill="#fff" stroke="#e8e8e8" stroke-width="1"/><text x="7.2" y="9.5" font-family="Liberation Sans" font-size="4.5" fill="#c0c8d8" text-anchor="middle">&#8220;99</text></svg>
<svg style="position:absolute;left:487.00px;top:612.60px" width="14.9" height="14.9" viewBox="0 0 14.9 14.9"><rect x="0.5" y="0.5" width="13.9" height="13.9" fill="#fff" stroke="#e8e8e8" stroke-width="1"/><text x="7.2" y="9.5" font-family="Liberation Sans" font-size="4.5" fill="#c0c8d8" text-anchor="middle">ABBR</text></svg>
<svg style="position:absolute;left:502.90px;top:612.60px" width="14.9" height="14.9" viewBox="0 0 14.9 14.9"><rect x="0.5" y="0.5" width="13.9" height="13.9" fill="#fff" stroke="#e8e8e8" stroke-width="1"/><text x="7.2" y="9.5" font-family="Liberation Sans" font-size="4.5" fill="#c0c8d8" text-anchor="middle">A.B.C</text></svg>
<svg style="position:absolute;left:518.80px;top:612.60px" width="14.9" height="14.9" viewBox="0 0 14.9 14.9"><rect x="0.5" y="0.5" width="13.9" height="13.9" fill="#fff" stroke="#e8e8e8" stroke-width="1"/><text x="7.2" y="11.5" font-family="Liberation Serif" font-size="11" fill="#c9d2e2" text-anchor="middle">A</text><rect x="1.5" y="8" width="11.5" height="0.8" fill="#e8a0a0"/></svg>
<svg style="position:absolute;left:534.70px;top:612.60px" width="14.9" height="14.9" viewBox="0 0 14.9 14.9"><rect x="0.5" y="0.5" width="13.9" height="13.9" fill="#fff" stroke="#e8e8e8" stroke-width="1"/><text x="7.2" y="11" font-family="Liberation Serif" font-size="11" fill="#c9d2e2" text-anchor="middle">A</text><rect x="2" y="12" width="10.5" height="0.8" fill="#a0d890"/></svg>
<svg style="position:absolute;left:550.60px;top:612.60px" width="14.9" height="14.9" viewBox="0 0 14.9 14.9"><rect x="0.5" y="0.5" width="13.9" height="13.9" fill="#fff" stroke="#e8e8e8" stroke-width="1"/><rect x="2" y="5.5" width="10" height="7" fill="#c9d6ea" stroke="#5a6a8a" stroke-width="0.8"/><rect x="2" y="5.5" width="10" height="1.6" fill="#4a5f88"/><path fill="#d4b13c" d="M4,6 L9,2 L12.5,4 L8,7.5 Z"/><path fill="#3aa040" d="M10,2 L13,2 L13,4.5 Z"/></svg>
<div style="position:absolute;left:569.90px;top:613.80px;width:1px;height:12px;background:#8d93a3"></div>
<svg style="position:absolute;left:572.70px;top:612.60px" width="14.9" height="14.9" viewBox="0 0 14.9 14.9"><rect x="0.5" y="0.5" width="13.9" height="13.9" fill="#fff" stroke="#e8e8e8" stroke-width="1"/><text x="7.2" y="11.5" font-family="Liberation Sans" font-weight="bold" font-size="10.5" fill="#000" text-anchor="middle">&#182;</text></svg>
<svg style="position:absolute;left:588.60px;top:612.60px" width="14.9" height="14.9" viewBox="0 0 14.9 14.9"><rect x="0.5" y="0.5" width="13.9" height="13.9" fill="#fff" stroke="#e8e8e8" stroke-width="1"/><rect x="2" y="2" width="10.5" height="10.5" fill="#f4d4d4" stroke="#b82020" stroke-width="1.1"/><path stroke="#b82020" stroke-width="1" d="M3,3 L11.5,11.5"/><path fill="none" stroke="#222" stroke-width="0.9" d="M10,5 L10,8.5 L4,8.5 M5.5,7 L4,8.5 L5.5,10"/></svg>
<svg style="position:absolute;left:604.50px;top:612.60px" width="14.9" height="14.9" viewBox="0 0 14.9 14.9"><rect x="0.5" y="0.5" width="13.9" height="13.9" fill="#fff" stroke="#e8e8e8" stroke-width="1"/><path fill="none" stroke="#5a6070" stroke-width="0.9" d="M1.5,1 L1.5,4.5 L13,4.5 L13,1 M1.5,13.5 L1.5,10 L13,10 L13,13.5 M0.5,7.2 L14,7.2"/></svg>
<div style="position:absolute;left:551.20px;top:554.90px;width:52.3px;height:15px;border:1px solid #d0d0d0;background:#fff"></div>
<div class="t" style="left:555.10px;top:559.94px;font-size:8.1px;color:#3a3a3a">Styles</div>
<div style="position:absolute;left:604.40px;top:554.90px;width:6.5px;height:15px;border:1px solid #d0d0d0;background:#fff"></div>
<svg style="position:absolute;left:606.20px;top:562.80px" width="5" height="3"><path fill="#000" d="M0.2,0.3 L4.3,0.3 L2.25,2.4 Z"/></svg>
<div style="position:absolute;left:613.20px;top:554.90px;width:52.3px;height:15px;border:1px solid #d0d0d0;background:#fff"></div>
<div class="t" style="left:617.10px;top:559.94px;font-size:8.1px;color:#3a3a3a">Paragraph</div>
<div style="position:absolute;left:666.40px;top:554.90px;width:6.5px;height:15px;border:1px solid #d0d0d0;background:#fff"></div>
<svg style="position:absolute;left:668.20px;top:562.80px" width="5" height="3"><path fill="#000" d="M0.2,0.3 L4.3,0.3 L2.25,2.4 Z"/></svg>
<div style="position:absolute;left:675.20px;top:554.90px;width:52.3px;height:15px;border:1px solid #d0d0d0;background:#fff"></div>
<div class="t" style="left:679.10px;top:559.94px;font-size:8.1px;color:#3a3a3a">Font Family</div>
<div style="position:absolute;left:728.40px;top:554.90px;width:6.5px;height:15px;border:1px solid #d0d0d0;background:#fff"></div>
<svg style="position:absolute;left:730.20px;top:562.80px" width="5" height="3"><path fill="#000" d="M0.2,0.3 L4.3,0.3 L2.25,2.4 Z"/></svg>
<div style="position:absolute;left:737.20px;top:554.90px;width:52.3px;height:15px;border:1px solid #d0d0d0;background:#fff"></div>
<div class="t" style="left:741.10px;top:559.94px;font-size:8.1px;color:#3a3a3a">Font Size</div>
<div style="position:absolute;left:790.40px;top:554.90px;width:6.5px;height:15px;border:1px solid #d0d0d0;background:#fff"></div>
<svg style="position:absolute;left:792.20px;top:562.80px" width="5" height="3"><path fill="#000" d="M0.2,0.3 L4.3,0.3 L2.25,2.4 Z"/></svg>
<svg style="position:absolute;left:751.60px;top:574.40px" width="14.9" height="14.9" viewBox="0 0 14.9 14.9"><rect x="0.5" y="0.5" width="13.9" height="13.9" fill="#fff" stroke="#e8e8e8" stroke-width="1"/><text x="7.2" y="10.8" font-family="Liberation Serif" font-weight="bold" font-size="12" fill="#2a55b0" text-anchor="middle">A</text><rect x="1.8" y="12.2" width="10.8" height="2" fill="#6a6a6a"/></svg>
<div style="position:absolute;left:767.50px;top:574.40px;width:6.3px;height:14.4px;border:1px solid #e6e6e6;background:#fff"></div>
<svg style="position:absolute;left:768.80px;top:581.60px" width="5" height="3"><path fill="#000" d="M0.2,0.3 L4.3,0.3 L2.25,2.4 Z"/></svg>
<svg style="position:absolute;left:775.70px;top:574.40px" width="14.9" height="14.9" viewBox="0 0 14.9 14.9"><rect x="0.5" y="0.5" width="13.9" height="13.9" fill="#fff" stroke="#e8e8e8" stroke-width="1"/><path fill="#f2e64a" d="M1.5,2 L8,2 L8,8 L1.5,8 Z"/><text x="4.8" y="7.5" font-family="Liberation Sans" font-size="6" fill="#333" text-anchor="middle">ab</text><path stroke="#4a70c0" stroke-width="1.6" d="M6.5,9.5 L12.5,3.5"/><rect x="1.8" y="12.2" width="10.8" height="2" fill="#6a6a6a"/></svg>
<div style="position:absolute;left:791.60px;top:574.40px;width:6.3px;height:14.4px;border:1px solid #e6e6e6;background:#fff"></div>
<svg style="position:absolute;left:792.90px;top:581.60px" width="5" height="3"><path fill="#000" d="M0.2,0.3 L4.3,0.3 L2.25,2.4 Z"/></svg>
</body></html>
